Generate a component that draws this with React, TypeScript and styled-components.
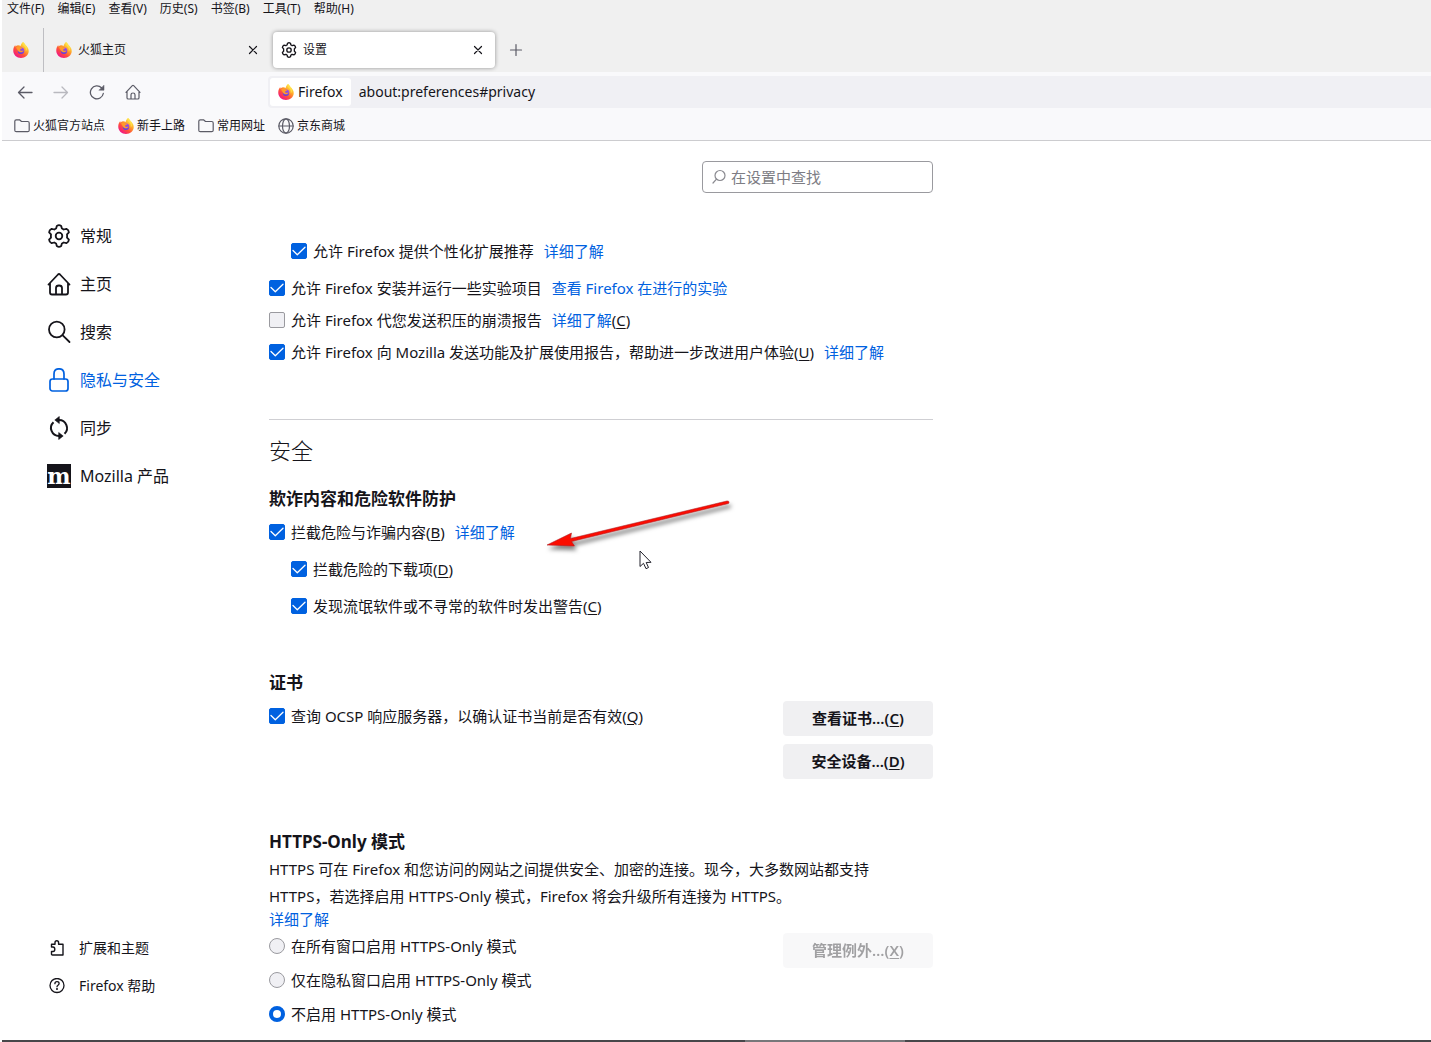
import React, { useId, useState } from 'react';
import styled, { createGlobalStyle } from 'styled-components';

const ink = '#15141a';
const accent = '#0061e0';

const GlobalStyle = createGlobalStyle`
  *, *::before, *::after { box-sizing: border-box; }
  body {
    margin: 0;
    background: #fff;
    color: ${ink};
    font-family: "Noto Sans", "Noto Sans CJK SC", sans-serif;
    font-size: 15px;
    line-height: 24px;
  }
  button, input { font: inherit; color: inherit; }
  svg { display: block; flex: none; }
`;

/* ---------- shell ---------- */

const Window = styled.div`
  display: flex;
  flex-direction: column;
  min-height: 100vh;
  padding-left: 2px;
  overflow-x: hidden;
`;

const PlainButton = styled.button`
  display: flex;
  align-items: center;
  justify-content: center;
  padding: 0;
  border: 0;
  background: none;
`;

const MenuBar = styled.nav`
  display: flex;
  gap: 13px;
  height: 28px;
  padding-left: 5px;
  background: #f0f0f0;
`;

const MenuItem = styled(PlainButton)`
  height: 18px;
  font-size: 12px;
  line-height: 18px;
  white-space: nowrap;
`;

const TabStrip = styled.div`
  display: flex;
  align-items: center;
  height: 44px;
  background: #f0f0f0;
  font-size: 12px;
`;

const PinnedTab = styled(PlainButton)`
  align-self: stretch;
  width: 42px;
  padding-right: 4px;
  border-right: 1px solid #bebec2;
`;

const Tab = styled.div<{ $active?: boolean }>`
  display: flex;
  align-items: center;
  gap: 6px;
  width: ${(p) => (p.$active ? 222 : 220)}px;
  height: 36px;
  margin-left: ${(p) => (p.$active ? 7 : 2)}px;
  padding: 0 ${(p) => (p.$active ? 11 : 7)}px 0 ${(p) => (p.$active ? 8 : 10)}px;
  border-radius: 4px;
  background: ${(p) => (p.$active ? '#fff' : 'transparent')};
  box-shadow: ${(p) => (p.$active ? '0 0 4px rgba(0, 0, 0, 0.4)' : 'none')};
`;

const TabTitle = styled.span`
  flex: 1;
`;

const NewTab = styled(PlainButton)`
  width: 16px;
  height: 32px;
  margin-left: 13px;
`;

const Toolbar = styled.div`
  display: flex;
  align-items: center;
  height: 40px;
  padding-left: 15px;
  background: #f9f9fb;
`;

const ToolButtons = styled.div`
  display: flex;
  gap: 20px;
  width: 251px;
  color: #5b5b66;
`;

const AddressBar = styled.div`
  display: flex;
  flex: 1;
  align-items: center;
  height: 32px;
  padding: 2px;
  border-radius: 4px 0 0 4px;
  background: #f0f0f4;
  font-size: 14px;
`;

const Identity = styled(PlainButton)`
  gap: 4px;
  height: 28px;
  padding: 0 8px;
  border-radius: 3px;
  background: #fff;
`;

const AddressInput = styled.input`
  flex: 1;
  min-width: 0;
  padding: 0 8px;
  border: 0;
  outline: 0;
  background: none;
`;

const Bookmarks = styled.nav`
  display: flex;
  gap: 13px;
  height: 29px;
  padding-left: 12px;
  border-bottom: 1px solid #cccccf;
  background: #f9f9fb;
`;

const Bookmark = styled.a`
  display: flex;
  align-items: center;
  gap: 3px;
  color: ${ink};
  font-size: 12px;
  text-decoration: none;
  svg { color: #5b5b66; }
`;

/* ---------- preferences page ---------- */

const Page = styled.div`
  display: flex;
  flex: 1;
`;

const Sidebar = styled.aside`
  display: flex;
  flex-direction: column;
  justify-content: space-between;
  flex: none;
  width: 267px;
  padding: 71px 0 35px 45px;
`;

const NavList = styled.nav`
  display: flex;
  flex-direction: column;
`;

const Category = styled.a<{ $selected?: boolean }>`
  display: flex;
  align-items: center;
  gap: 9px;
  height: 48px;
  color: ${(p) => (p.$selected ? accent : ink)};
  font-size: 16px;
  text-decoration: none;
`;

const FooterLink = styled.a`
  display: flex;
  align-items: center;
  gap: 14px;
  height: 38px;
  padding-left: 2px;
  color: ${ink};
  font-size: 14px;
  text-decoration: none;
`;

const MozillaMark = styled.span`
  width: 24px;
  height: 24px;
  background: ${ink};
  color: #fff;
  font: bold 22px/24px "DejaVu Serif", serif;
  text-align: center;
`;

const Content = styled.main`
  flex: 1;
  max-width: 664px;
  padding: 20px 0 14px;
`;

const SearchBox = styled.label`
  display: flex;
  align-items: center;
  gap: 4px;
  width: 231px;
  height: 32px;
  margin-left: auto;
  padding: 0 8px;
  border: 1px solid #9a9a9f;
  border-radius: 4px;
  color: #8a8a90;
`;

const SearchInput = styled.input`
  flex: 1;
  min-width: 0;
  padding: 0;
  border: 0;
  outline: 0;
  background: none;
  &::placeholder { color: #7d7d84; opacity: 1; }
`;

const DataOptions = styled.section`
  display: flex;
  flex-direction: column;
  gap: 8px;
  padding: 46px 0 55px;
`;

const SecuritySection = styled.section`
  position: relative;
  padding-top: 16px;
  border-top: 1px solid #cfcfd3;
`;

const SectionTitle = styled.h1`
  margin: 0 0 23px;
  font-size: 22px;
  font-weight: 300;
  line-height: 28px;
`;

const Group = styled.section<{ $top?: number }>`
  margin-top: ${(p) => p.$top ?? 0}px;
`;

const GroupTitle = styled.h2`
  margin: 0;
  font-size: 17px;
  font-weight: 700;
  line-height: 24px;
`;

const Options = styled.div<{ $gap: number; $top?: number }>`
  display: flex;
  flex-direction: column;
  gap: ${(p) => p.$gap}px;
  padding-top: ${(p) => p.$top ?? 0}px;
`;

const OptionRow = styled.div<{ $nested?: boolean; $spaced?: boolean }>`
  display: flex;
  align-items: center;
  height: 24px;
  padding-left: ${(p) => (p.$nested ? 22 : 0)}px;
  margin-bottom: ${(p) => (p.$spaced ? 5 : 0)}px;
  white-space: nowrap;
`;

const OptionLabel = styled.label`
  padding-left: 6px;
`;

const Link = styled.a`
  margin-left: 10px;
  color: ${accent};
  text-decoration: none;
`;

const BlockLink = styled.a`
  display: block;
  width: fit-content;
  color: ${accent};
  line-height: 18px;
  text-decoration: none;
`;

const AccessKey = styled.u`
  text-decoration-thickness: 1px;
  text-underline-offset: 2px;
`;

const CheckCell = styled.span`
  display: grid;
  place-items: center;
  width: 16px;
  height: 16px;
  svg, input { grid-area: 1 / 1; }
  svg { pointer-events: none; z-index: 1; }
`;

const CheckInput = styled.input`
  appearance: none;
  width: 16px;
  height: 16px;
  margin: 0;
  border: 1px solid #9a9a9f;
  border-radius: 2px;
  background: #f0f0f4;
  &:checked { border-color: ${accent}; background: ${accent}; }
`;

const RadioInput = styled.input`
  appearance: none;
  width: 16px;
  height: 16px;
  margin: 0;
  border: 1px solid #9a9a9f;
  border-radius: 50%;
  background: #f0f0f4;
  &:checked { border: 4px solid ${accent}; background: #fff; }
`;

const Split = styled.div<{ $top: number }>`
  display: flex;
  justify-content: space-between;
  align-items: flex-start;
  margin-top: ${(p) => p.$top}px;
`;

const ButtonColumn = styled.div`
  display: flex;
  flex-direction: column;
  gap: 8px;
`;

const ActionButton = styled.button`
  width: 150px;
  height: 35px;
  padding: 0 0 2px;
  border: 0;
  border-radius: 4px;
  background: #f0f0f2;
  font-weight: 600;
  &:disabled { color: ${ink}; opacity: 0.4; }
`;

const Description = styled.p`
  max-width: 640px;
  margin: 2px 0 0;
  line-height: 27px;
`;

const Annotation = styled.svg`
  position: absolute;
  left: 273px;
  top: 75px;
  pointer-events: none;
`;

const Pointer = styled.svg`
  position: absolute;
  left: 370px;
  top: 130px;
  pointer-events: none;
`;

const Taskbar = styled.footer`
  display: flex;
  justify-content: center;
  height: 2px;
  background: #47474a;
  &::after {
    content: "";
    width: 160px;
    margin-left: 216px;
    background: #77777a;
  }
`;

/* ---------- drawings ---------- */

const line = {
  fill: 'none',
  stroke: 'currentColor',
  strokeLinecap: 'round' as const,
  strokeLinejoin: 'round' as const,
};

function FirefoxIcon() {
  const id = useId();
  return (
    <svg width="16" height="16" viewBox="0 0 32 32" aria-hidden="true">
      <defs>
        <linearGradient id={id + 'a'} x1="0.85" y1="0.1" x2="0.2" y2="0.95">
          <stop offset="0" stopColor="#fff44f" />
          <stop offset="0.35" stopColor="#ffa62b" />
          <stop offset="0.65" stopColor="#ff4f3a" />
          <stop offset="1" stopColor="#f0128c" />
        </linearGradient>
        <linearGradient id={id + 'b'} x1="0.7" y1="0" x2="0.3" y2="1">
          <stop offset="0" stopColor="#a04cf0" />
          <stop offset="1" stopColor="#5a3fd8" />
        </linearGradient>
      </defs>
      <path fill={`url(#${id}a)`} d="M20 0c3 2 4 4 4.500 6.500C28 8 31.500 12.500 31.500 18c0 8-7 14-15.500 14S.5 25.500.5 17.500C.5 13 2 9 4.500 6c0 1.500.3 2.300.8 3 1.500-1.600 3.200-2.300 5-2.500 2-.1 3.500.5 5 1.500C16 4.500 17.500 1.500 20 0z" />
      <circle cx="16" cy="17.500" r="6.500" fill={`url(#${id}b)`} />
      <path fill="#ff9a2a" d="M6 11c2.500-2 6-2 8.500-.5 1 .8 2 1.200 3.500 1.300-.2 1.700-1.700 2.200-3.200 2.700-1 .4-.8 2 .5 2.800 2.200 1 4-.8 6-.2-1.300 3.400-6 4.700-9.300 2.500C9.500 18 8.500 14 6 11z" />
      <path fill="#ffe14a" d="M20 0c-2 4 .5 7.500 3 9.500 2.500 2.500 3.500 6 2 9.500 3.500-2 4.500-6.500 2.500-10C26 5 22.500 4 20 0z" opacity="0.8" />
    </svg>
  );
}

function GearIcon({ size }: { size: number }) {
  return (
    <svg width={size} height={size} viewBox="0 0 24 24" strokeWidth={size > 20 ? 1.8 : 2} {...line} aria-hidden="true">
      <path d="M9.800 1.900 Q12 .5 14.200 1.900 L14.900 4.500 Q15.900 4.900 16.700 5.500 L19.400 4.800 Q21.800 6 21.900 8.300 L20 10.300 Q20.200 12 20 13.700 L21.900 15.700 Q21.800 18 19.400 19.200 L16.700 18.500 Q15.900 19.100 14.900 19.500 L14.200 22.100 Q12 23.500 9.800 22.100 L9.100 19.500 Q8.100 19.100 7.300 18.500 L4.600 19.200 Q2.200 18 2.100 15.700 L4 13.700 Q3.800 12 4 10.300 L2.100 8.300 Q2.200 6 4.600 4.800 L7.300 5.500 Q8.100 4.900 9.100 4.500 Z" />
      <circle cx="12" cy="12" r="3.300" />
    </svg>
  );
}

function HomeIcon({ size }: { size: number }) {
  return (
    <svg width={size} height={size} viewBox="0 0 24 24" strokeWidth={1.8} {...line} aria-hidden="true">
      <path d="M1.500 12.500 L11 2.500 Q12 1.500 13 2.500 L22.500 12.500 M3 11 V20.500 Q3 22.500 5 22.500 H19 Q21 22.500 21 20.500 V11 M9 22.500 V16 Q9 13.500 12 13.500 Q15 13.500 15 16 V22.500" />
    </svg>
  );
}

const SearchIcon = () => (
  <svg width="24" height="24" viewBox="0 0 24 24" strokeWidth={1.800} {...line} aria-hidden="true">
    <circle cx="9.800" cy="9.500" r="7.800" />
    <path d="M15.500 15.200 L22.500 22" />
  </svg>
);

const LockIcon = () => (
  <svg width="24" height="24" viewBox="0 0 24 24" strokeWidth={1.700} {...line} aria-hidden="true">
    <rect x="3" y="11" width="18" height="12" rx="2.500" />
    <path d="M7 11 V6 Q7 .8 12 .8 Q17 .8 17 6 V11" />
  </svg>
);

const SyncIcon = () => (
  <svg width="24" height="24" viewBox="0 0 24 24" strokeWidth={2} {...line} strokeLinecap="butt" aria-hidden="true">
    <path d="M12 4 A8 8 0 0 1 17.500 17.800 M12 20 A8 8 0 0 1 6.500 6.200" />
    <path d="M12.300 .5 V7.500 L7.800 4 Z M11.700 16.500 V23.500 L16.200 20 Z" fill="currentColor" strokeWidth={0.600} />
  </svg>
);

const FolderIcon = () => (
  <svg width="16" height="16" viewBox="0 0 16 16" strokeWidth={1.200} {...line} aria-hidden="true">
    <path d="M.8 3.300 Q.8 1.800 2.300 1.800 H5.500 L7.500 3.500 H13.700 Q15.200 3.500 15.200 5 V12.200 Q15.200 13.700 13.700 13.700 H2.300 Q.8 13.700 .8 12.200 Z" />
  </svg>
);

const GlobeIcon = () => (
  <svg width="16" height="16" viewBox="0 0 16 16" strokeWidth={1.200} {...line} aria-hidden="true">
    <circle cx="8" cy="8" r="7.200" />
    <ellipse cx="8" cy="8" rx="3.500" ry="7.200" />
    <path d="M1 8 H15" />
  </svg>
);

const BackIcon = () => (
  <svg width="16" height="16" viewBox="0 0 16 16" strokeWidth={1.300} {...line} aria-hidden="true">
    <path d="M15 8.500 H1.500 M7 3 L1.500 8.500 L7 14" />
  </svg>
);

const ForwardIcon = () => (
  <svg width="16" height="16" viewBox="0 0 16 16" strokeWidth={1.300} opacity="0.4" {...line} aria-hidden="true">
    <path d="M1 8.500 H14.500 M9 3 L14.500 8.500 L9 14" />
  </svg>
);

const ReloadIcon = () => (
  <svg width="16" height="16" viewBox="0 0 16 16" strokeWidth={1.300} {...line} aria-hidden="true">
    <path d="M14.300 9.500 A6.500 6.500 0 1 1 12.500 3.800" />
    <path d="M15 1.500 V6.200 H10.200 Z" fill="currentColor" strokeWidth={0.500} />
  </svg>
);

const CloseIcon = () => (
  <svg width="12" height="12" viewBox="0 0 12 12" strokeWidth={1.200} {...line} aria-hidden="true">
    <path d="M2.500 2.500 L9.500 9.500 M9.500 2.500 L2.500 9.500" />
  </svg>
);

const PlusIcon = () => (
  <svg width="14" height="14" viewBox="0 0 14 14" strokeWidth={1.200} {...line} stroke="#5b5b66" aria-hidden="true">
    <path d="M7 1.500 V12.500 M1.500 7 H12.500" />
  </svg>
);

const FindIcon = () => (
  <svg width="16" height="16" viewBox="0 0 16 16" strokeWidth={1.200} {...line} aria-hidden="true">
    <circle cx="9" cy="6.500" r="5" />
    <path d="M5.500 10.200 L2 14" />
  </svg>
);

const PuzzleIcon = () => (
  <svg width="16" height="16" viewBox="0 0 16 16" strokeWidth={1.400} {...line} aria-hidden="true">
    <path d="M2.500 7 V4.300 H6 V2.800 Q6 .8 7.800 .8 Q9.600 .8 9.600 2.800 V4.300 H14 V15 H3.500 Q2.500 15 2.500 14 V11.500 H4 Q5.800 11.500 5.800 9.300 Q5.800 7 4 7 Z" />
  </svg>
);

const HelpIcon = () => (
  <svg width="16" height="16" viewBox="0 0 16 16" strokeWidth={1.300} {...line} aria-hidden="true">
    <circle cx="8" cy="7.500" r="7" />
    <path d="M5.900 5.700 Q5.900 3.700 8 3.700 Q10.100 3.700 10.100 5.500 Q10.100 6.500 9 7.200 Q8 7.900 8 8.800" />
    <circle cx="8" cy="11" r="0.400" fill="currentColor" />
  </svg>
);

/* ---------- controls ---------- */

interface CheckOptionProps {
  label: React.ReactNode;
  hotkey?: string;
  link?: string;
  linkHotkey?: string;
  initial?: boolean;
  nested?: boolean;
  spaced?: boolean;
}

const Key = ({ k }: { k: string }) => <>(<AccessKey>{k}</AccessKey>)</>;

function CheckOption({ label, hotkey, link, linkHotkey, initial = true, nested, spaced }: CheckOptionProps) {
  const id = useId();
  const [checked, setChecked] = useState(initial);
  return (
    <OptionRow $nested={nested} $spaced={spaced}>
      <CheckCell>
        <CheckInput id={id} type="checkbox" checked={checked} onChange={() => setChecked(!checked)} />
        {checked && (
          <svg width="16" height="16" viewBox="0 0 16 16" fill="none" stroke="#fff" strokeWidth="1.300" strokeLinecap="round" strokeLinejoin="round" aria-hidden="true">
            <path d="M2 7.500 L6.300 11.700 L14 4.300" />
          </svg>
        )}
      </CheckCell>
      <OptionLabel htmlFor={id}>
        {label}
        {hotkey && <Key k={hotkey} />}
      </OptionLabel>
      {link && <Link href="#more">{link}</Link>}
      {linkHotkey && <label htmlFor={id}><Key k={linkHotkey} /></label>}
    </OptionRow>
  );
}

const menus = [['文件', 'F'], ['编辑', 'E'], ['查看', 'V'], ['历史', 'S'], ['书签', 'B'], ['工具', 'T'], ['帮助', 'H']];

const categories = [
  { label: '常规', icon: <GearIcon size={24} /> },
  { label: '主页', icon: <HomeIcon size={24} /> },
  { label: '搜索', icon: <SearchIcon /> },
  { label: '隐私与安全', icon: <LockIcon />, selected: true },
  { label: '同步', icon: <SyncIcon /> },
  { label: 'Mozilla 产品', icon: <MozillaMark>m</MozillaMark> },
];

const httpsModes = ['在所有窗口启用 HTTPS-Only 模式', '仅在隐私窗口启用 HTTPS-Only 模式', '不启用 HTTPS-Only 模式'];

export default function App() {
  const [mode, setMode] = useState(2);
  const [address, setAddress] = useState('about:preferences#privacy');
  return (
    <Window>
      <GlobalStyle />
      <MenuBar>
        {menus.map(([name, key]) => <MenuItem key={key}>{name}({key})</MenuItem>)}
      </MenuBar>
      <TabStrip>
        <PinnedTab aria-label="Firefox"><FirefoxIcon /></PinnedTab>
        <Tab>
          <FirefoxIcon />
          <TabTitle>火狐主页</TabTitle>
          <PlainButton aria-label="关闭"><CloseIcon /></PlainButton>
        </Tab>
        <Tab $active>
          <GearIcon size={16} />
          <TabTitle>设置</TabTitle>
          <PlainButton aria-label="关闭"><CloseIcon /></PlainButton>
        </Tab>
        <NewTab aria-label="新标签页"><PlusIcon /></NewTab>
      </TabStrip>
      <Toolbar>
        <ToolButtons>
          <PlainButton aria-label="后退"><BackIcon /></PlainButton>
          <PlainButton aria-label="前进"><ForwardIcon /></PlainButton>
          <PlainButton aria-label="刷新"><ReloadIcon /></PlainButton>
          <PlainButton aria-label="主页"><HomeIcon size={16} /></PlainButton>
        </ToolButtons>
        <AddressBar>
          <Identity><FirefoxIcon />Firefox</Identity>
          <AddressInput aria-label="地址" value={address} onChange={(e) => setAddress(e.target.value)} />
        </AddressBar>
      </Toolbar>
      <Bookmarks>
        <Bookmark href="#sites"><FolderIcon />火狐官方站点</Bookmark>
        <Bookmark href="#start"><FirefoxIcon />新手上路</Bookmark>
        <Bookmark href="#common"><FolderIcon />常用网址</Bookmark>
        <Bookmark href="#jd"><GlobeIcon />京东商城</Bookmark>
      </Bookmarks>
      <Page>
        <Sidebar>
          <NavList>
            {categories.map((c) => (
              <Category key={c.label} href="#category" $selected={c.selected}>
                {c.icon}
                {c.label}
              </Category>
            ))}
          </NavList>
          <NavList>
            <FooterLink href="#addons"><PuzzleIcon />扩展和主题</FooterLink>
            <FooterLink href="#help"><HelpIcon />Firefox 帮助</FooterLink>
          </NavList>
        </Sidebar>
        <Content>
          <SearchBox>
            <FindIcon />
            <SearchInput aria-label="在设置中查找" placeholder="在设置中查找" />
          </SearchBox>
          <DataOptions>
            <CheckOption nested spaced label="允许 Firefox 提供个性化扩展推荐" link="详细了解" />
            <CheckOption label="允许 Firefox 安装并运行一些实验项目" link="查看 Firefox 在进行的实验" />
            <CheckOption initial={false} label="允许 Firefox 代您发送积压的崩溃报告" link="详细了解" linkHotkey="C" />
            <CheckOption label="允许 Firefox 向 Mozilla 发送功能及扩展使用报告，帮助进一步改进用户体验" hotkey="U" link="详细了解" />
          </DataOptions>
          <SecuritySection>
            <SectionTitle>安全</SectionTitle>
            <Group>
              <GroupTitle>欺诈内容和危险软件防护</GroupTitle>
              <Options $gap={13} $top={9}>
                <CheckOption label="拦截危险与诈骗内容" hotkey="B" link="详细了解" />
                <CheckOption nested label="拦截危险的下载项" hotkey="D" />
                <CheckOption nested label="发现流氓软件或不寻常的软件时发出警告" hotkey="C" />
              </Options>
            </Group>
            <Group $top={53}>
              <GroupTitle>证书</GroupTitle>
              <Split $top={6}>
                <Options $gap={8} $top={3}>
                  <CheckOption label="查询 OCSP 响应服务器，以确认证书当前是否有效" hotkey="Q" />
                </Options>
                <ButtonColumn>
                  <ActionButton>查看证书…<Key k="C" /></ActionButton>
                  <ActionButton>安全设备…<Key k="D" /></ActionButton>
                </ButtonColumn>
              </Split>
            </Group>
            <Group $top={51}>
              <GroupTitle>HTTPS-Only 模式</GroupTitle>
              <Description>
                HTTPS 可在 Firefox 和您访问的网站之间提供安全、加密的连接。现今，大多数网站都支持 HTTPS，若选择启用 HTTPS-Only 模式，Firefox 将会升级所有连接为 HTTPS。
              </Description>
              <BlockLink href="#https">详细了解</BlockLink>
              <Split $top={5}>
                <Options $gap={10} $top={1} role="radiogroup">
                  {httpsModes.map((text, i) => (
                    <OptionRow key={text}>
                      <RadioInput id={`https-${i}`} type="radio" name="https" checked={mode === i} onChange={() => setMode(i)} />
                      <OptionLabel htmlFor={`https-${i}`}>{text}</OptionLabel>
                    </OptionRow>
                  ))}
                </Options>
                <ActionButton disabled>管理例外…<Key k="X" /></ActionButton>
              </Split>
            </Group>
            <Annotation width="200" height="62" viewBox="0 0 200 62" aria-hidden="true">
              <defs>
                <filter id="arrow-shadow" x="-10%" y="-30%" width="120%" height="180%">
                  <feDropShadow dx="2" dy="4" stdDeviation="2" floodColor="#000" floodOpacity="0.5" />
                </filter>
              </defs>
              <path d="M5 50 L29.500 38 L28.500 43.500 L185 6 Q188 6 186.500 8.500 L29.500 46.500 L32.500 51 Z" fill="#fb0a06" stroke="#a01010" strokeWidth="0.500" filter="url(#arrow-shadow)" />
            </Annotation>
            <Pointer width="13" height="20" viewBox="0 0 13 20" aria-hidden="true">
              <path d="M1 1 V16.500 L4.500 13.300 L7 18.700 L9.500 17.500 L7.200 12.500 L12 12.300 Z" fill="#fff" stroke="#22222c" />
            </Pointer>
          </SecuritySection>
        </Content>
      </Page>
      <Taskbar />
    </Window>
  );
}
